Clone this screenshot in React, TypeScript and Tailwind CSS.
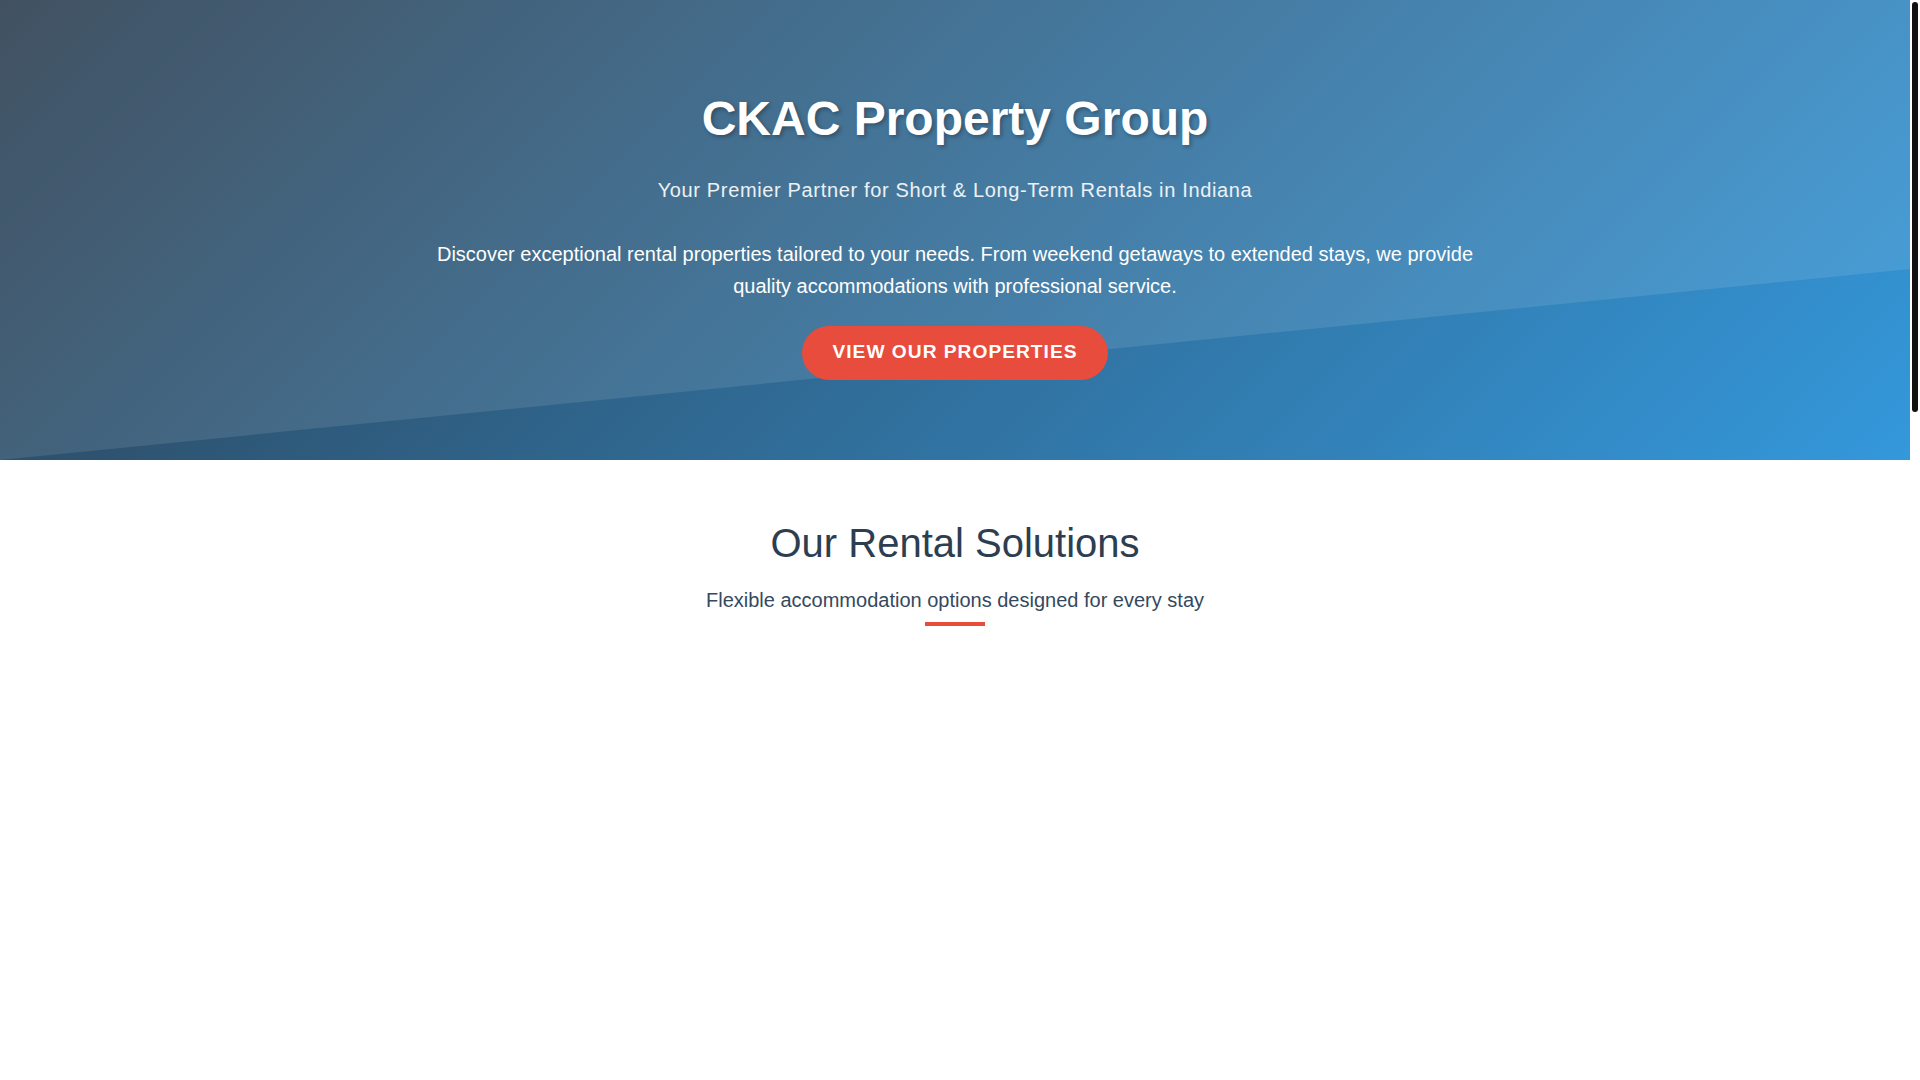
import React from "react";

const font = "font-['Liberation_Sans',Arial,Helvetica,sans-serif]";

function Hero() {
  return (
    <section className="relative h-[460px] overflow-hidden bg-[linear-gradient(135deg,#2c3e50_0%,#3498db_100%)]">
      {/* light angled sheen across the upper part of the banner */}
      <div className="pointer-events-none absolute inset-0 bg-white/10 [clip-path:polygon(0_0,100%_0,100%_58.5%,0_100%)]" />
      <div className="relative flex flex-col items-center pt-[90px] text-center text-white">
        <h1 className="mb-[26px] text-[48px] font-bold leading-[1.2] [text-shadow:2px_2px_4px_rgba(0,0,0,0.3)]">
          CKAC Property Group
        </h1>
        <p className="text-[20px] leading-8 tracking-[0.65px] text-white/90">
          Your Premier Partner for Short &amp; Long-Term Rentals in Indiana
        </p>
        <p className="mx-auto mt-[32px] max-w-[1080px] text-[20px] leading-8 text-white">
          Discover exceptional rental properties tailored to your needs. From weekend getaways to extended stays, we
          provide quality accommodations with professional service.
        </p>
        <a
          href="#properties"
          className="mt-[24px] inline-flex h-[54px] items-center rounded-full bg-[#e74c3c] px-[30px] text-[19.2px] font-bold uppercase tracking-[1px] text-white"
        >
          View Our Properties
        </a>
      </div>
    </section>
  );
}

function Solutions() {
  return (
    <section id="properties" className="flex flex-1 flex-col items-center bg-white pt-[60px] text-center">
      <h2 className="mb-[18px] text-[40px] font-normal leading-[1.15] text-[#2c3e50]">Our Rental Solutions</h2>
      <p className="text-[20px] leading-8 text-[#34495e]">Flexible accommodation options designed for every stay</p>
      <span className="mt-[6px] block h-1 w-[60px] bg-[#e74c3c]" />
    </section>
  );
}

/* slim page scroll rail with a dark rounded thumb */
function ScrollRail() {
  return (
    <aside className="w-[10px] shrink-0 bg-white px-[2px] pt-[2px]">
      <div className="h-[410px] w-[6px] rounded-full bg-[#111]" />
    </aside>
  );
}

export default function App() {
  return (
    <div className={`${font} flex h-screen overflow-hidden bg-white`}>
      <main className="flex min-w-0 flex-1 flex-col">
        <Hero />
        <Solutions />
      </main>
      <ScrollRail />
    </div>
  );
}
